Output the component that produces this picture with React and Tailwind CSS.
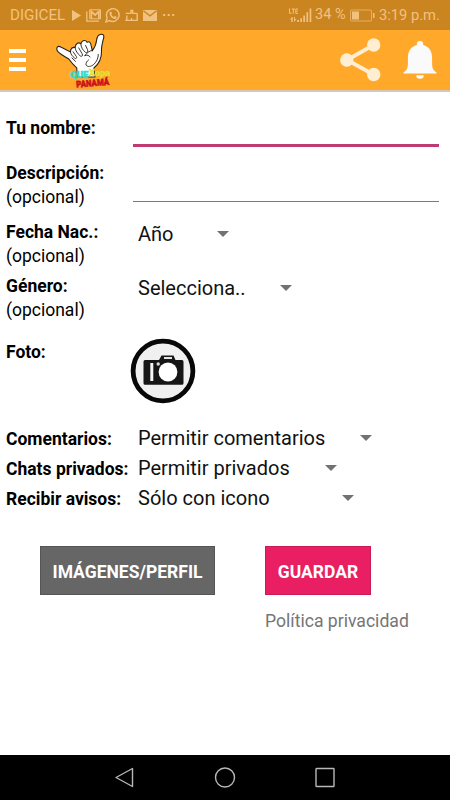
import React from 'react';
import clsx from 'clsx';

function StatusBar() {
  return (
    <div className="flex h-[30px] shrink-0 items-center justify-between bg-[#cb8520] px-[10px] text-[#f1c27f]">
      <div className="flex items-center">
        <span className="w-[62px] text-[15.2px] leading-[32px]">DIGICEL</span>
        <svg width="104" height="18" viewBox="72 6 104 18" fill="currentColor">
          <path d="M72 10v11l9-5.500z" />
          <path d="M86.800 11.500v9.700H99" fill="none" stroke="currentColor" strokeWidth="1.300" />
          <path d="M89.700 9.800h10.800v9H89.700z" fill="none" stroke="currentColor" strokeWidth="1" />
          <path d="M91.300 18.800v-7.300l3.800 3.500 3.800-3.500v7.300" fill="none" stroke="currentColor" strokeWidth="1.700" />
          <path d="M106 21.800l1.100-3.800a6.400 6.400 0 1 1 2.500 2.600z" fill="none" stroke="currentColor" strokeWidth="1.400" />
          <path d="M109.700 12.200c.6-1 1.400-.8 1.700-.1l.6 1.400-.7 1c.6 1.100 1.400 1.800 2.600 2.400l.9-1 1.800.9c.4.3-.2 1.800-1.500 2.100-2.700.3-6.200-3.400-5.400-6.700z" />
          <path d="M125.800 13.400h5.200M131 13.400v-2.900h1.600v2.900h4.600M126.800 15.500v4.900h-1.600M127 20.400h10.200v-6.900M131.500 18v2.400" fill="none" stroke="currentColor" strokeWidth="1.400" />
          <path d="M143 10h14v11h-14z" />
          <path d="M143.400 10.800l6.600 5 6.600-5" fill="none" stroke="#cb8520" strokeWidth="1.400" />
          <path d="M163.200 14h2v2h-2zM167.700 14h2v2h-2zM172.200 14h2v2h-2z" />
        </svg>
      </div>
      <div className="flex items-center">
        <svg width="25" height="18" viewBox="288 6 25 18" fill="currentColor">
          <path d="M289.500 8.500v4.800h2M291.800 9h3M293.300 9v4.800M298 9h-2.200v4.300h2.200M295.800 11.100h1.900" fill="none" stroke="currentColor" strokeWidth="1" />
          <path d="M292 17l-2 2.500h1.300V22h1.400v-5zM294 17v5l2.500-2.800H295V17z" />
          <path d="M297.200 20h1.800v2h-1.800zM300.300 18.300h1.700V22h-1.700zM303.300 15.400h1.700V22h-1.700zM306.400 12.200h1.700V22h-1.700zM309.600 8.500h1.700V22h-1.700z" />
        </svg>
        <span className="ml-[2px] w-[35px] whitespace-nowrap text-[14.5px] leading-[34px]">34 %</span>
        <svg width="25" height="14" viewBox="350 8 25 14">
          <rect x="350.500" y="10" width="21" height="11" rx="1" fill="none" stroke="currentColor" strokeWidth="1" opacity=".7" />
          <path d="M352 11.500h7v8h-7zM373 13h1.500v5H373z" fill="currentColor" />
        </svg>
        <span className="ml-[4px] w-[61px] whitespace-nowrap text-[14.7px] leading-[34px]">3:19 p.m.</span>
      </div>
    </div>
  );
}

function Logo() {
  return (
    <svg width="60" height="58" viewBox="54 32 60 58" className="ml-[28px] mt-[2px]">
      <path
        d="M57.200 47.200c1-1.500 3-.6 4.600.4l8.600 4.300c.2-3.300 1.800-4.900 4.600-4.500.8-4 3.500-5.700 5.800-3.700 1.200-3.800 4.700-4.200 6.300-1.500 2.300-1.200 3.800.4 4 3.200l1.200 5.200c2.500-3 3.800-6 4.300-10.300.3-2.900 1.800-6 4.700-6.100 2-.1 2.800 1.200 2.500 3.100-1.500 5.400-2.600 9.700-2.300 14.200.2 7.500-2.600 12.500-7.600 16.500l1 9H77.500l-.8-9.200c-3.100-2.800-5.500-5.400-7.700-8.600-2.800-2-7.700-4.200-10.500-7-1.500-1.600-2.400-3.200-1.300-5z"
        fill="#fff"
        stroke="#29231b"
        strokeWidth="1.1"
      />
      <path
        d="M70.400 51.900c.4 2.400 2 4.400 4.200 6.200 1.500 1.200 2.800-.3 1.500-2l-3-4.300M75 47.400c.5 3.600 2.600 6.200 5.300 8.600 1.800.8 2.800-.4 1.800-2.300l-3.400-5.800M80.800 43.700c.2 3.700 1.900 6.400 4.600 8.600 1.900 1 2.900-.5 2.200-2.500l-2-4.300M92.300 50.400c-2.500.1-5.500 2.600-7.700 5.400 2.800-1.200 4.600-.5 5.400 1.200M88.500 60c-1.500 1-2.800 2.900-2.500 5.100 1.800 2.300 5.200 1.500 7.800-.7 2.800-2.700 4.600-6.200 4.500-10M72 58l3.500 3.300"
        fill="none"
        stroke="#29231b"
        strokeWidth=".9"
        strokeLinecap="round"
      />
      <g fontFamily="Roboto, sans-serif" fontWeight="900">
        <text x="70" y="78.300" fontSize="9.500" textLength="18.500" lengthAdjust="spacingAndGlyphs" fill="#35dad2" stroke="#35dad2" strokeWidth=".5">QUE</text>
        <text x="89" y="75.500" fontSize="9.500" textLength="21" lengthAdjust="spacingAndGlyphs" fill="#f2ee3e" stroke="#dfcf2c" strokeWidth=".5">Xopa</text>
        <text x="76.500" y="87.500" fontSize="9" textLength="33" lengthAdjust="spacingAndGlyphs" fill="#d5131b" stroke="#c9151a" strokeWidth=".6" transform="rotate(-5 77 87)">PANAMÁ</text>
      </g>
    </svg>
  );
}

function AppBar() {
  return (
    <header className="flex h-[62px] shrink-0 items-start border-b-2 border-[#d3c8bb] bg-[#ffa829]">
      <button aria-label="Menu" className="ml-[9px] mt-[19px] flex w-[17px] flex-col gap-[5px]">
        <span className="h-1 w-full bg-white" />
        <span className="h-1 w-full bg-white" />
        <span className="h-1 w-full bg-white" />
      </button>
      <Logo />
      <div className="ml-auto mr-[13px] mt-[7px] flex">
        <svg width="44" height="46" viewBox="339 37 44 46" className="mr-[19px]">
          <path d="M373.500 45L347 60l26.500 14.500" fill="none" stroke="#ffeed2" strokeWidth="3.800" />
          <g fill="#ffeed2">
            <circle cx="373.700" cy="45" r="6.700" />
            <circle cx="346.800" cy="60" r="6.700" />
            <circle cx="373.700" cy="74.500" r="6.700" />
          </g>
        </svg>
        <svg width="35" height="46" viewBox="402 37 35 46" fill="#fafafa">
          <path d="M403.500 72.500c3-2 4.400-4 4.400-8.200v-6.500c0-7 3.400-11.200 8.900-12.700v-1.100a3.200 3 0 0 1 6.400 0v1.100c5.500 1.500 8.900 5.700 8.900 12.700v6.500c0 4.200 1.400 6.200 4.400 8.200v1h-33z" />
          <path d="M416.200 75.200h7.600a3.800 3.600 0 0 1-7.600 0z" />
        </svg>
      </div>
    </header>
  );
}

function Label({ text, optional, className = 'pt-px' }) {
  return (
    <div className={clsx('w-[127px] shrink-0 whitespace-nowrap text-[17.5px] leading-6 text-black', className)}>
      <div className="font-bold">{text}</div>
      {optional && <div>(opcional)</div>}
    </div>
  );
}

function Select({ value, width, className }) {
  return (
    <button className={clsx('flex h-6 items-center justify-between pl-[5px] text-[20px] leading-6 text-[#111]', width, className)}>
      <span className="whitespace-nowrap">{value}</span>
      <svg width="12" height="6" viewBox="0 0 12 6" className="shrink-0">
        <path d="M0 0h12L6 6z" fill="#727272" />
      </svg>
    </button>
  );
}

function CameraIcon() {
  return (
    <svg width="66" height="66" viewBox="130 338 66 66">
      <circle cx="163" cy="371" r="29.900" fill="#f0f0f0" stroke="#080808" strokeWidth="4.800" />
      <path d="M145 360h14l2.500-4.500h12l2 4.500h6.500q1.500 0 1.500 1.700v21.500q0 1.500-1.700 1.500h-36.800q-1.500 0-1.500-1.500v-21.500q0-1.700 1.500-1.700z" fill="#161616" />
      <path d="M164 357h8v2h-8z" fill="#e5e5e5" />
      <path d="M150.300 363h3v18h-3z" fill="#f5f5f5" />
      <circle cx="158.200" cy="364" r="1.700" fill="#ddd" />
      <circle cx="168" cy="372" r="9.400" fill="#fff" />
    </svg>
  );
}

const preferences = [
  { label: 'Comentarios:', value: 'Permitir comentarios', width: 'w-[239px]' },
  { label: 'Chats privados:', value: 'Permitir privados', width: 'w-[204px]' },
  { label: 'Recibir avisos:', value: 'Sólo con icono', width: 'w-[221px]' },
];

function ProfileForm() {
  return (
    <main className="flex-1 bg-white px-[6px] pt-6">
      <div className="flex h-[44px]">
        <Label text="Tu nombre:" className="pt-0" />
        <div className="h-[31px] w-[306px] border-b-[3px] border-[#c13b73]" />
      </div>
      <div className="flex h-[59px]">
        <Label text="Descripción:" optional />
        <div className="h-[42px] w-[306px] border-b border-[#7b7b7b]" />
      </div>
      <div className="flex h-[54px]">
        <Label text="Fecha Nac.:" optional />
        <Select value="Año" width="w-[96px]" className="mt-[3px]" />
      </div>
      <div className="flex h-[66px]">
        <Label text="Género:" optional />
        <Select value="Selecciona.." width="w-[159px]" className="mt-[3px]" />
      </div>
      <div className="flex h-[87px]">
        <Label text="Foto:" />
        <div className="-ml-[3px] -mt-px"><CameraIcon /></div>
      </div>
      {preferences.map((item) => (
        <div key={item.label} className="flex h-[30px]">
          <Label text={item.label} />
          <Select value={item.value} width={item.width} />
        </div>
      ))}
      <div className="flex items-start pl-[34px] pt-[30px]">
        <button className="h-[49px] w-[175px] whitespace-nowrap border border-[#555] bg-[#666] pt-[3px] text-[17.5px] font-bold text-white">
          IMÁGENES/PERFIL
        </button>
        <div className="ml-[50px]">
          <button className="block h-[49px] w-[106px] border border-[#c91b59] bg-[#e91e63] pt-[3px] text-[17.5px] font-bold text-white">
            GUARDAR
          </button>
          <a className="mt-[14px] block whitespace-nowrap text-[17.6px] leading-6 text-[#757575]">Política privacidad</a>
        </div>
      </div>
    </main>
  );
}

const navIcons = [
  'M18 1.500v18L1.500 10.500z',
  'M10.500 1a9.500 9.500 0 1 1 0 19a9.500 9.500 0 1 1 0-19z',
  'M2 1.500h17q.5 0 .5.500v17q0 .500-.5.500h-17q-.5 0-.5-.500v-17q0-.500.5-.500z',
];

function NavBar() {
  return (
    <nav className="flex h-[45px] shrink-0 items-center justify-center gap-[78px] bg-black">
      {navIcons.map((d) => (
        <svg key={d} width="22" height="21" viewBox="-.5 0 22 21" fill="none" stroke="#b8b8b8" strokeWidth="1.400" strokeLinejoin="round">
          <path d={d} />
        </svg>
      ))}
    </nav>
  );
}

export default function App() {
  return (
    <div className="flex h-[800px] w-[450px] flex-col overflow-hidden bg-white font-[Roboto,sans-serif]">
      <StatusBar />
      <AppBar />
      <ProfileForm />
      <NavBar />
    </div>
  );
}
